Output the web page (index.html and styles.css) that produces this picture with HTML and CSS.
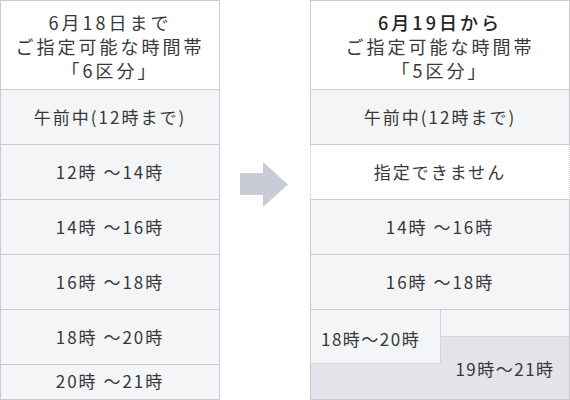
FILE: index.html
```html
<!DOCTYPE html>
<html lang="ja">
<head>
<meta charset="utf-8">
<link rel="stylesheet" href="styles.css">
</head>
<body>
<div class="page">
  <div class="col col-left">
    <div class="head"><span class="line">6月18日まで</span><span class="line">ご指定可能な時間帯</span><span class="line">「6区分」</span></div>
    <div class="row">午前中(12時まで)</div>
    <div class="row">12時 ～14時</div>
    <div class="row">14時 ～16時</div>
    <div class="row">16時 ～18時</div>
    <div class="row">18時 ～20時</div>
    <div class="row row-short">20時 ～21時</div>
  </div>
  <div class="arrow-area">
    <svg class="arrow" width="48" height="46" viewBox="0 0 48 46"><path d="M0 11H23V0L48 22.5L23 45V33H0Z" fill="#c9cbd7"/></svg>
  </div>
  <div class="col col-right">
    <div class="head"><span class="line strong">6月19日から</span><span class="line">ご指定可能な時間帯</span><span class="line">「5区分」</span></div>
    <div class="row">午前中(12時まで)</div>
    <div class="row row-none">指定できません</div>
    <div class="row">14時 ～16時</div>
    <div class="row">16時 ～18時</div>
    <div class="split">
      <div class="split-a">18時～20時</div>
      <div class="split-top"></div>
      <div class="split-b">19時～21時</div>
    </div>
  </div>
</div>
</body>
</html>
```
FILE: styles.css
```css
html, body {
  margin: 0;
  padding: 0;
  background: #fff;
}
body {
  font-family: "Noto Sans CJK JP", "Noto Sans", sans-serif;
  color: #383838;
  width: 570px;
  height: 400px;
  overflow: hidden;
}
.page {
  display: flex;
  align-items: flex-start;
}
.col {
  display: flex;
  flex-direction: column;
}
.col-left { width: 220px; }
.col-right { width: 260px; }
.arrow-area {
  width: 90px;
  height: 400px;
  display: flex;
  align-items: flex-start;
  padding-top: 162px;
  padding-left: 20px;
  box-sizing: border-box;
}
.head {
  box-sizing: border-box;
  height: 90px;
  border: 1px solid #c9cad6;
  background: #fff;
  display: flex;
  flex-direction: column;
  align-items: center;
  font-size: 18px;
  letter-spacing: 3px;
  padding-top: 9px;
}
.line {
  display: block;
  height: 24px;
  line-height: 24px;
}
.strong { font-weight: 500; color: #222; }
.row {
  box-sizing: border-box;
  height: 55px;
  border: 1px solid #c9cad6;
  border-top: 0;
  background: #f4f5f7;
  display: flex;
  align-items: center;
  justify-content: center;
  font-size: 17px;
  letter-spacing: 2px;
  padding-bottom: 1px;
}
.row-short { height: 35px; padding-bottom: 3px; }
.row-none {
  background: #fff;
  border-left: 1px dotted #c9cad6;
  border-right: 1px dotted #c9cad6;
}
.split {
  box-sizing: border-box;
  height: 90px;
  border: 1px solid #c9cad6;
  border-top: 0;
  background: #e3e4e9;
  display: grid;
  grid-template-columns: 130px 1fr;
  grid-template-rows: 27px 27px 1fr;
  font-size: 17px;
  letter-spacing: 1.5px;
}
.split-a {
  grid-column: 1;
  grid-row: 1 / 3;
  background: #f4f5f7;
  border-right: 1px solid #d3d4dd;
  border-bottom: 1px solid #d3d4dd;
  display: flex;
  align-items: center;
  padding-left: 10px;
  padding-top: 4px;
}
.split-top {
  grid-column: 2;
  grid-row: 1;
  background: #f4f5f7;
  border-bottom: 1px solid #d3d4dd;
}
.split-b {
  grid-column: 2;
  grid-row: 2 / 4;
  display: flex;
  align-items: center;
  justify-content: center;
}
```
